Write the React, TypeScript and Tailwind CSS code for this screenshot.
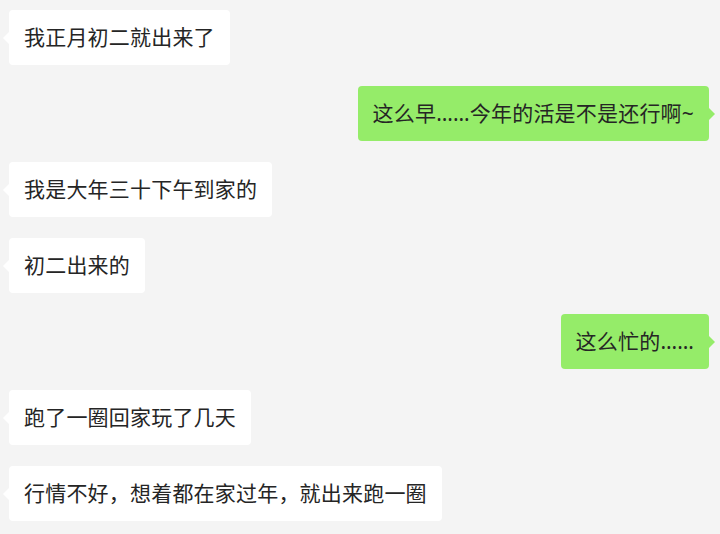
type Message = {
  id: number;
  text: string;
  mine?: boolean;
};

const messages: Message[] = [
  { id: 1, text: "我正月初二就出来了" },
  { id: 2, text: "这么早……今年的活是不是还行啊~", mine: true },
  { id: 3, text: "我是大年三十下午到家的" },
  { id: 4, text: "初二出来的" },
  { id: 5, text: "这么忙的……", mine: true },
  { id: 6, text: "跑了一圈回家玩了几天" },
  { id: 7, text: "行情不好，想着都在家过年，就出来跑一圈" },
];

function Bubble({ message }: { message: Message }) {
  const { text, mine } = message;

  return (
    <div className={mine ? "flex justify-end pr-[11px]" : "flex justify-start pl-[9px]"}>
      <div
        className={
          mine
            ? "relative rounded-[4px] bg-[#95ec69] px-[15px] py-[12px] text-[21px] leading-[31px] tracking-[0.2px] text-[#252525]"
            : "relative rounded-[4px] bg-white px-[15px] py-[12px] text-[21px] leading-[31px] tracking-[0.2px] text-[#252525]"
        }
      >
        {text}
        <span
          className={
            mine
              ? "absolute top-1/2 right-[-6px] -translate-y-1/2 border-y-[6px] border-l-[6px] border-y-transparent border-l-[#95ec69]"
              : "absolute top-1/2 left-[-6px] -translate-y-1/2 border-y-[6px] border-r-[6px] border-y-transparent border-r-white"
          }
        />
      </div>
    </div>
  );
}

export default function App() {
  return (
    <div className="h-[534px] w-[720px] overflow-hidden bg-[#f4f4f4] font-['Noto_Sans','Noto_Sans_CJK_SC',sans-serif]">
      <div className="flex flex-col gap-[21px] pt-[10px]">
        {messages.map((message) => (
          <Bubble key={message.id} message={message} />
        ))}
      </div>
    </div>
  );
}
